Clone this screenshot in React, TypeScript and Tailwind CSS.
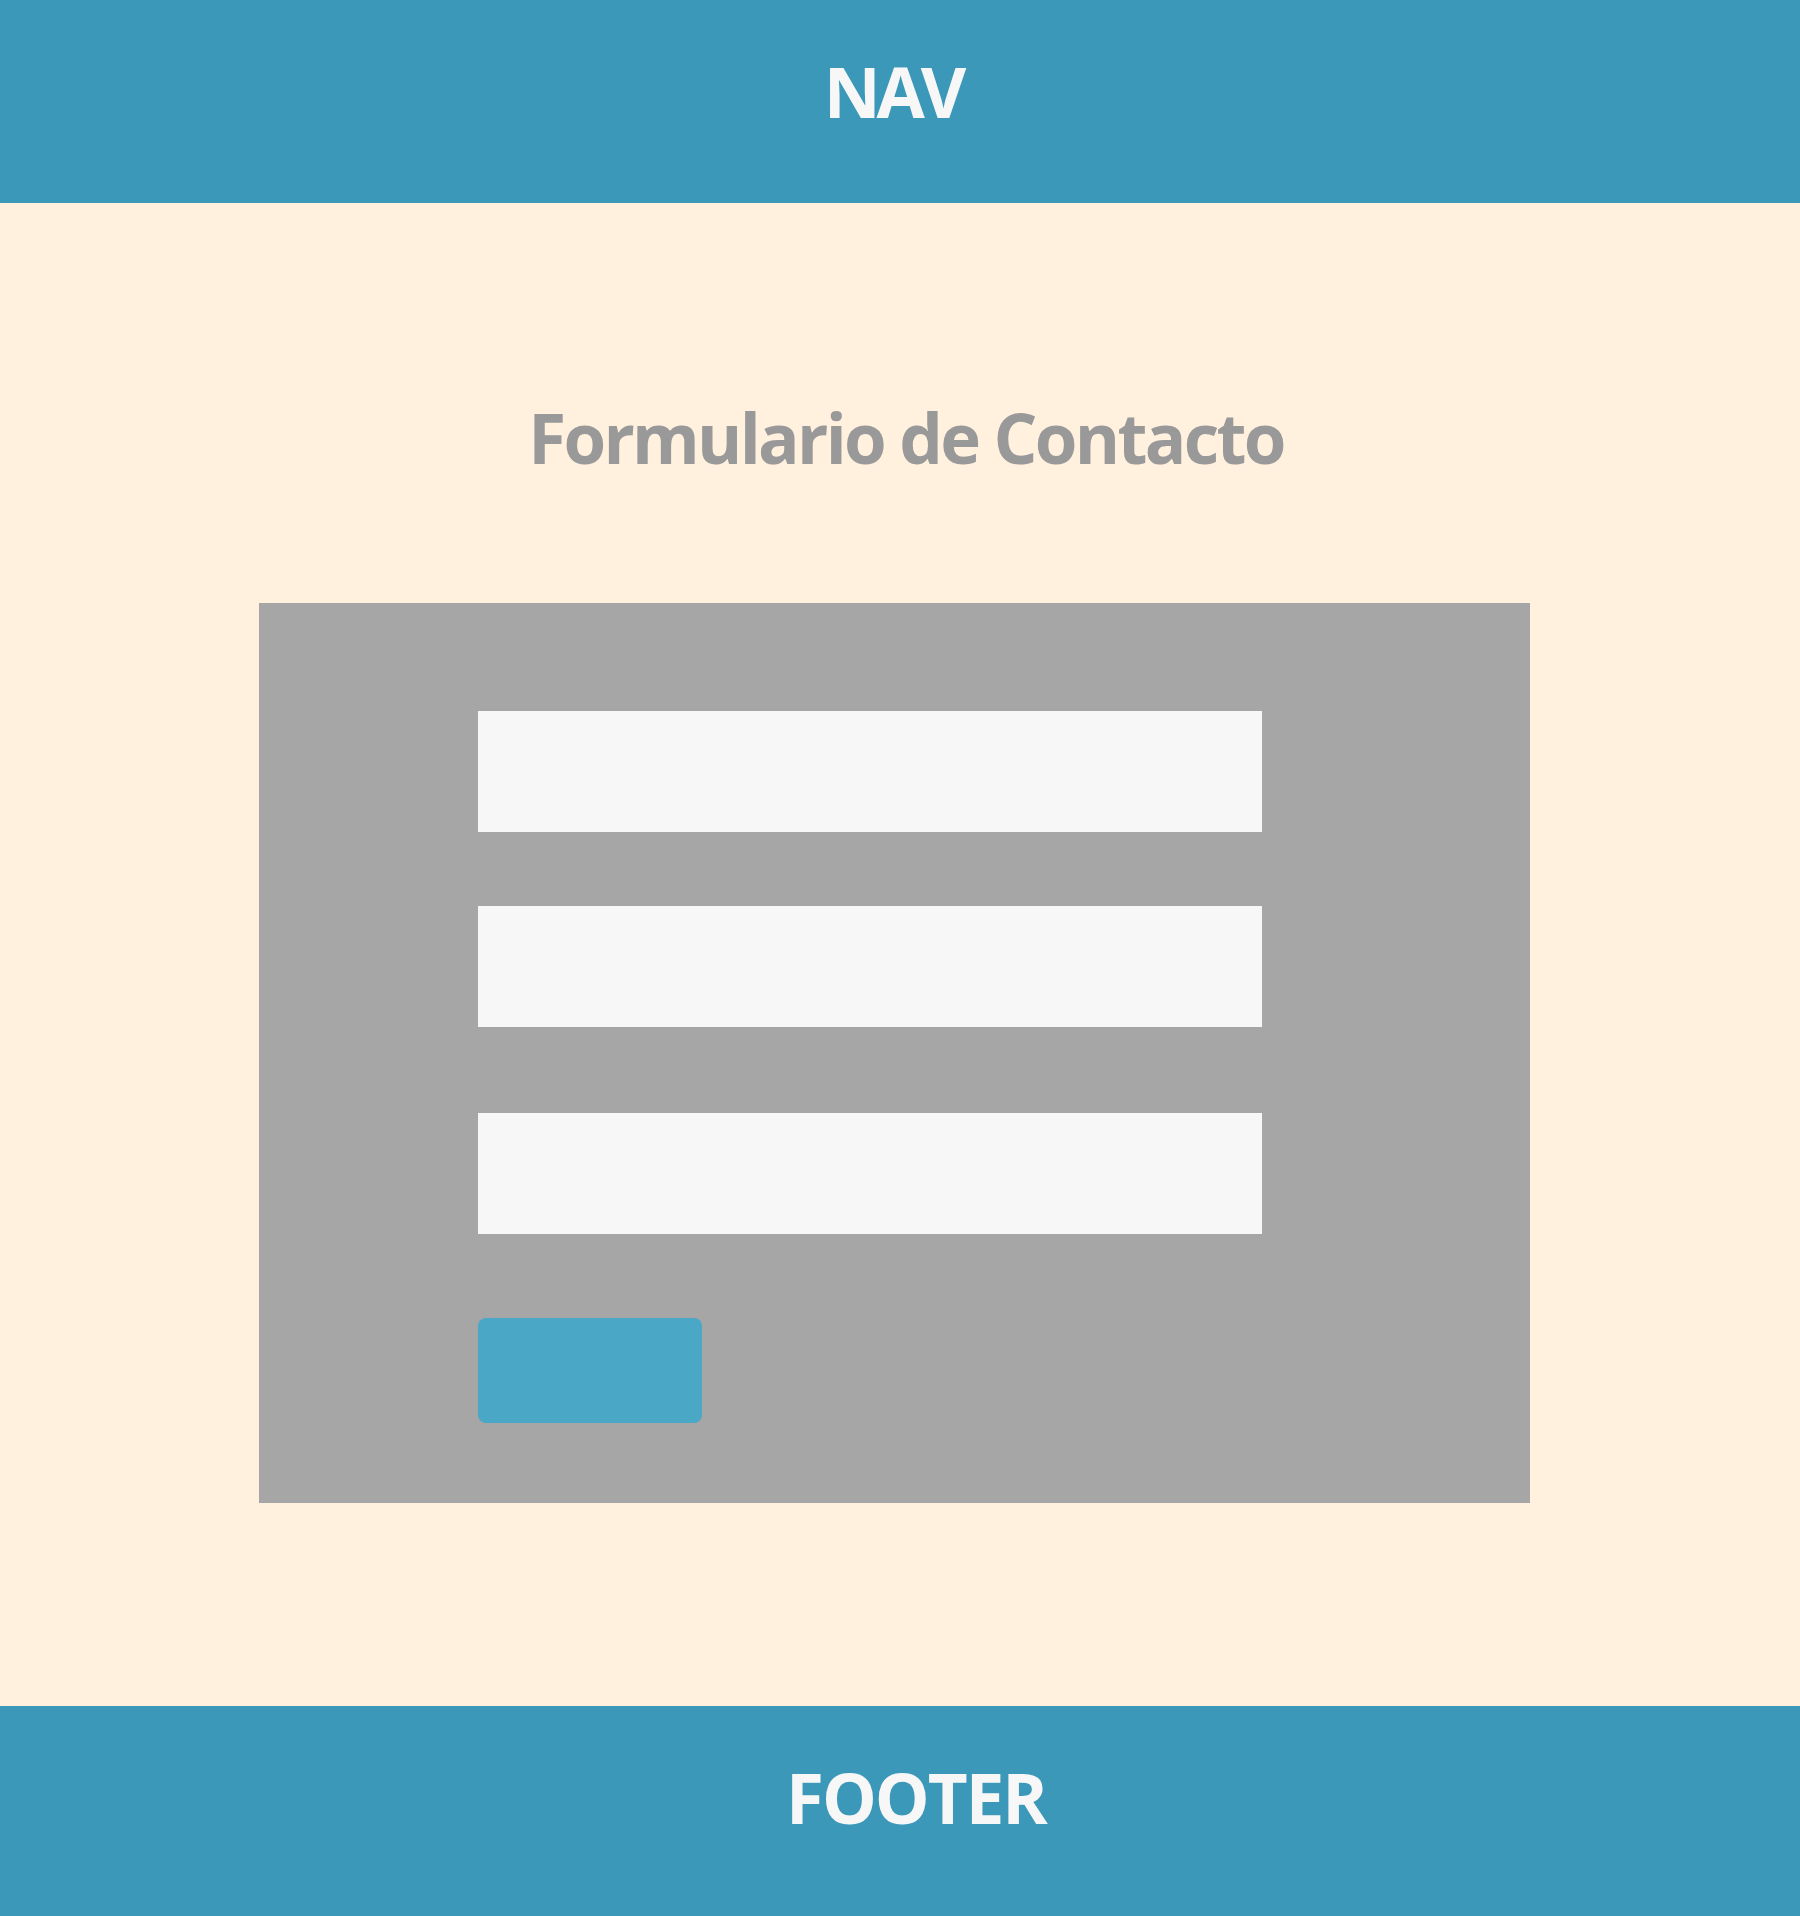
import React from "react";

export default function App() {
  const font = { fontFamily: '"Open Sans", "Noto Sans", sans-serif' };
  return (
    <div className="w-[1800px] min-h-[1916px] flex flex-col bg-[#fff1de]" style={font}>
      <nav className="h-[203px] bg-[#3b98b9] flex justify-center pt-[56px] pr-[14px]">
        <span className="text-[70px] leading-none font-bold text-[#f7f7f7] tracking-[-4px]">NAV</span>
      </nav>
      <main className="flex-1 flex flex-col items-center pt-[200px] pb-[203px]">
        <h1 className="text-[69px] leading-none font-bold text-[#999999] tracking-[-2.7px] pl-[12px]">
          Formulario de Contacto
        </h1>
        <form className="mt-[131px] self-start ml-[259px] w-[1271px] h-[900px] bg-[#a6a6a6] pl-[219px] pt-[108px] flex flex-col items-start">
          <div className="w-[784px] h-[121px] bg-[#f7f7f7]" />
          <div className="w-[784px] h-[121px] bg-[#f7f7f7] mt-[74px]" />
          <div className="w-[784px] h-[121px] bg-[#f7f7f7] mt-[86px]" />
          <button type="button" className="w-[224px] h-[105px] bg-[#4aa7c5] rounded-[8px] mt-[84px]" />
        </form>
      </main>
      <footer className="h-[210px] bg-[#3b98b9] flex justify-center pt-[57px] pl-[32px]">
        <span className="text-[69px] leading-none font-bold text-[#f7f7f7] tracking-[-2px]">FOOTER</span>
      </footer>
    </div>
  );
}
